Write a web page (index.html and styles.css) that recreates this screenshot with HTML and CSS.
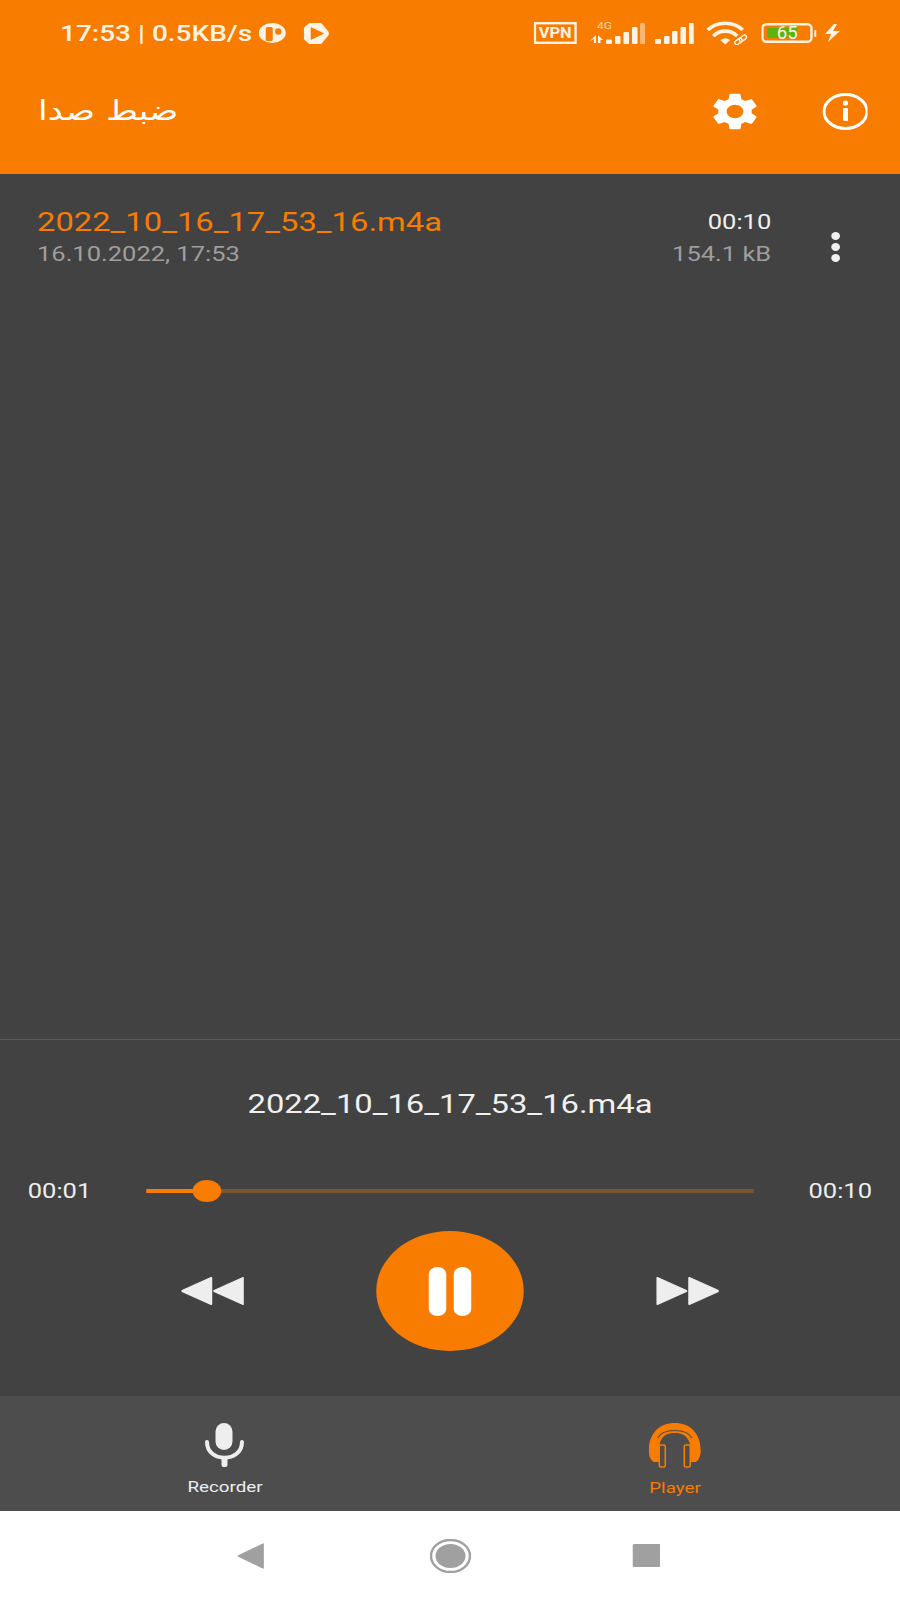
FILE: index.html
```html
<!DOCTYPE html>
<html lang="en">
<head>
<meta charset="utf-8">
<title>Recorder</title>
<link rel="stylesheet" href="styles.css">
</head>
<body>
<div class="screen">
  <header class="appbar">
    <div class="status">
      <div class="status-left">
        <span class="clock">17:53 | 0.5KB/s</span>
        <svg class="ic-a" width="21.6" height="20" viewBox="0 0 27 20" preserveAspectRatio="none"><ellipse cx="13.5" cy="10" rx="13.5" ry="10" fill="#fff3e6"/><rect x="7" y="4" width="7" height="14" rx="1.5" fill="#f77c00"/><circle cx="19.5" cy="8.5" r="3.2" fill="#f77c00"/></svg>
        <svg class="ic-b" width="20.8" height="21" viewBox="0 0 26 21" preserveAspectRatio="none"><path d="M6 1.2 H17 L24.8 10.5 L17 19.8 H6 L1.2 15.5 V5.5Z" fill="#fff3e6" stroke="#fff3e6" stroke-width="2.4" stroke-linejoin="round"/><path d="M7 4 L20.5 10.5 L7 17Z" fill="#f77c00"/></svg>
      </div>
      <div class="status-right">
        <svg class="ic-vpn" width="34.4" height="22" viewBox="0 0 43 22" preserveAspectRatio="none"><rect x="1.2" y="1.2" width="40.6" height="19.6" fill="none" stroke="#fff3e6" stroke-width="2.4"/><text x="21.5" y="16" text-anchor="middle" class="svg-vpn" textLength="33" lengthAdjust="spacingAndGlyphs">VPN</text></svg>
        <svg class="ic-sig1" width="44" height="22" viewBox="0 0 55 22" preserveAspectRatio="none"><text x="7" y="7" class="svg-4g" textLength="15" lengthAdjust="spacingAndGlyphs">4G</text><path d="M6 13 V21 H4 V17 L0 19Z M8 13 L13 18 H10.5 V21 H8Z" fill="#fff3e6"/><rect x="16" y="17.5" width="6" height="4.5" rx="1" fill="#fff3e6"/><rect x="25" y="14" width="5.5" height="8" rx="1" fill="#fff3e6"/><rect x="33.5" y="10" width="5.5" height="12" rx="1" fill="#fff3e6"/><rect x="42" y="5" width="5.5" height="17" rx="1" fill="#fff3e6"/><rect x="50" y="1" width="5" height="21" rx="1" fill="#fbb673"/></svg>
        <svg class="ic-sig2" width="31.2" height="22" viewBox="0 0 39 22" preserveAspectRatio="none"><rect x="0" y="17" width="6" height="5" rx="1" fill="#fff3e6"/><rect x="9" y="14" width="5.5" height="8" rx="1" fill="#fff3e6"/><rect x="17" y="9" width="5.5" height="13" rx="1" fill="#fff3e6"/><rect x="25.5" y="5" width="5.5" height="17" rx="1" fill="#fff3e6"/><rect x="34" y="1" width="5" height="21" rx="1" fill="#fff3e6"/></svg>
        <svg class="ic-wifi" width="32.8" height="24" viewBox="0 0 41 24" preserveAspectRatio="none"><g fill="none" stroke="#fff3e6" stroke-width="3.6"><path d="M1.5 9 C11 0 27 0 36.5 9"/><path d="M7 15 C14 8.5 24 8.5 31 15"/></g><path d="M14 19 C16.5 17 21.5 17 24 19 L19 23.5Z" fill="#fff3e6"/><g fill="none" stroke="#fff3e6" stroke-width="1.5"><rect x="28" y="18.5" width="8" height="4" rx="2" transform="rotate(-35 32 20)"/><rect x="32.5" y="15" width="8" height="4" rx="2" transform="rotate(-35 37 17)"/></g></svg>
        <svg class="ic-bat" width="44.8" height="20" viewBox="0 0 56 20" preserveAspectRatio="none"><rect x="1.2" y="1.2" width="49" height="17.6" rx="4" fill="none" stroke="#fff3e6" stroke-width="2.4"/><rect x="6" y="5" width="30" height="10" fill="#5db30c"/><text x="26" y="16" text-anchor="middle" class="svg-bat" textLength="21" lengthAdjust="spacingAndGlyphs">65</text><rect x="53" y="7" width="3" height="7" rx="1" fill="#fff3e6"/></svg>
        <svg class="ic-bolt" width="12" height="18" viewBox="0 0 15 18" preserveAspectRatio="none"><path d="M9 0 L0 10 H6 L3 18 L15 7 H8 L12 0Z" fill="#fff3e6"/></svg>
      </div>
    </div>
    <div class="toolbar">
      <span class="title" dir="rtl">ضبط صدا</span>
      <div class="actions">
        <svg class="gear" width="36" height="37" viewBox="2.3 2 19.4 20" preserveAspectRatio="none"><path fill="#fff" d="M19.14 12.94c.04-.3.06-.61.06-.94 0-.32-.02-.64-.07-.94l2.03-1.58c.18-.14.23-.41.12-.61l-1.92-3.32c-.12-.22-.37-.29-.59-.22l-2.39.96c-.5-.38-1.03-.7-1.62-.94l-.36-2.54c-.04-.24-.24-.41-.48-.41h-3.84c-.24 0-.43.17-.47.41l-.36 2.54c-.59.24-1.13.57-1.62.94l-2.39-.96c-.22-.08-.47 0-.59.22L2.74 8.87c-.12.21-.08.47.12.61l2.03 1.58c-.05.3-.09.63-.09.94s.02.64.07.94l-2.03 1.58c-.18.14-.23.41-.12.61l1.92 3.32c.12.22.37.29.59.22l2.39-.96c.5.38 1.03.7 1.62.94l.36 2.54c.05.24.24.41.48.41h3.84c.24 0 .44-.17.47-.41l.36-2.54c.59-.24 1.13-.56 1.62-.94l2.39.96c.22.08.47 0 .59-.22l1.92-3.32c.12-.22.07-.47-.12-.61l-2.01-1.58zM12 15.6c-1.98 0-3.6-1.62-3.6-3.6s1.62-3.6 3.6-3.6 3.6 1.62 3.6 3.6-1.62 3.6-3.6 3.6z"/></svg>
        <svg class="info" width="36.8" height="37" viewBox="0 0 46 37" preserveAspectRatio="none"><ellipse cx="23" cy="18.5" rx="21.5" ry="17" fill="none" stroke="#fff" stroke-width="3"/><rect x="20.5" y="15" width="5" height="13" rx="1" fill="#fff"/><circle cx="23" cy="10" r="2.6" fill="#fff"/></svg>
      </div>
    </div>
  </header>

  <main class="list">
    <div class="row">
      <div class="row-main">
        <div class="name">2022_10_16_17_53_16.m4a</div>
        <div class="sub">16.10.2022, 17:53</div>
      </div>
      <div class="row-meta">
        <div class="dur">00:10</div>
        <div class="sub">154.1 kB</div>
      </div>
      <div class="more"><i class="dot"></i><i class="dot"></i><i class="dot"></i></div>
    </div>
  </main>

  <section class="player">
    <div class="player-name">2022_10_16_17_53_16.m4a</div>
    <div class="seek">
      <span class="time">00:01</span>
      <div class="track"><div class="played"></div><div class="thumb"></div></div>
      <span class="time">00:10</span>
    </div>
    <div class="controls">
      <svg width="50.4" height="28" viewBox="0 0 63 28" preserveAspectRatio="none"><path fill="#eee" stroke="#eee" stroke-width="2" stroke-linejoin="round" d="M30 1 V27 L1 14Z M62 1 V27 L33 14Z"/></svg>
      <div class="play"><i class="bar"></i><i class="bar"></i></div>
      <svg width="50.4" height="28" viewBox="0 0 63 28" preserveAspectRatio="none"><path fill="#eee" stroke="#eee" stroke-width="2" stroke-linejoin="round" d="M1 1 V27 L30 14Z M33 1 V27 L62 14Z"/></svg>
    </div>
  </section>

  <nav class="tabs">
    <div class="tab">
      <svg width="31.2" height="44" viewBox="0 0 39 44" preserveAspectRatio="none"><rect x="10.5" y="0" width="17" height="27" rx="8.5" fill="#eee"/><path d="M2 19 C2 40 37 40 37 19" fill="none" stroke="#eee" stroke-width="4" stroke-linecap="round"/><rect x="16.5" y="33" width="6" height="11" rx="2" fill="#eee"/></svg>
      <span class="tab-label">Recorder</span>
    </div>
    <div class="tab tab-on">
      <svg width="41.6" height="45" viewBox="0 0 52 45" preserveAspectRatio="none"><path fill="#f77c00" d="M0 28 C0 10 11 0 26 0 C41 0 52 10 52 28 C52 33 50 37 47 39 L41 39 L41 20 C38 12 33 10 26 10 C19 10 14 12 11 20 L11 39 L5 39 C2 37 0 33 0 28Z"/><path d="M9 15 C14 5 38 5 43 15" fill="none" stroke="#4d4d4d" stroke-width="1.2"/><rect x="10.5" y="22" width="6" height="22" rx="1.5" fill="#4d4d4d" stroke="#f77c00" stroke-width="1.5"/><rect x="35.5" y="22" width="6" height="22" rx="1.5" fill="#4d4d4d" stroke="#f77c00" stroke-width="1.5"/></svg>
      <span class="tab-label">Player</span>
    </div>
  </nav>

  <footer class="sysnav">
    <svg width="21.6" height="26" viewBox="0 0 27 26" preserveAspectRatio="none"><path d="M26 1 V25 L1 13Z" fill="#a0a0a0" stroke="#a0a0a0" stroke-width="1.5" stroke-linejoin="round"/></svg>
    <svg class="sys-home" width="32.8" height="34" viewBox="0 0 41 34" preserveAspectRatio="none"><ellipse cx="20.5" cy="17" rx="19.5" ry="16" fill="none" stroke="#a0a0a0" stroke-width="2.4"/><ellipse cx="20.5" cy="17" rx="15" ry="12" fill="#a0a0a0"/></svg>
    <svg width="22.4" height="23" viewBox="0 0 28 23" preserveAspectRatio="none"><rect width="28" height="23" rx="1.5" fill="#a0a0a0"/></svg>
  </footer>
</div>
</body>
</html>
```
FILE: styles.css
```css
* { box-sizing: border-box; }
html, body { margin: 0; padding: 0; background: #fff; overflow: hidden; }
body { width: 900px; height: 1600px; font-family: Roboto, "Liberation Sans", sans-serif; }

/* The source capture is stretched 1.25x horizontally: lay out at 720 wide and stretch once. */
.screen { width: 720px; height: 1600px; display: flex; flex-direction: column; transform: scaleX(1.25); transform-origin: 0 0; background: #424242; }

.appbar { height: 174px; flex: none; background: #f77c00; color: #fff; }
.status { height: 66px; display: flex; align-items: center; justify-content: space-between; padding: 0 48px 0 48px; }
.status-left, .status-right { display: flex; align-items: center; }
.clock { font-size: 22.4px; font-weight: 500; color: #fff3e6; white-space: nowrap; }
.ic-a { margin-left: 5.6px; }
.ic-b { margin-left: 13.6px; }
.status-right svg { display: block; }
.ic-sig1 { margin-left: 10px; }
.ic-sig2 { margin-left: 8px; }
.ic-wifi { margin-left: 10.4px; }
.ic-bat { margin-left: 10.4px; }
.ic-bolt { margin-left: 6.7px; }
.svg-vpn { font: 700 15px Roboto, sans-serif; fill: #fff3e6; }
.svg-4g { font: 400 9px Roboto, sans-serif; fill: #fdd9b5; }
.svg-bat { font: 400 18px Roboto, sans-serif; fill: #fff3e6; }

.toolbar { height: 94px; display: flex; align-items: center; justify-content: space-between; padding: 0 25.6px 0 30.4px; margin-top: -2px; }
.title { font-family: "DejaVu Sans", sans-serif; font-size: 27.6px; line-height: 40px; }
.actions { display: flex; align-items: center; gap: 52px; }

.list { flex: 1; min-height: 0; }
.row { display: flex; align-items: flex-start; padding: 31px 0 0 29.6px; }
.row-main { flex: 1; }
.row-meta { text-align: right; }
.name { font-size: 26.2px; line-height: 34px; color: #f77c00; white-space: nowrap; }
.sub { font-size: 20.4px; line-height: 30px; color: #9e9e9e; white-space: nowrap; }
.dur { font-size: 20.4px; line-height: 34px; color: #f0f0f0; }
.more { width: 100px; display: flex; flex-direction: column; align-items: center; gap: 3px; padding: 27px 0 0 3px; margin-right: 3px; }
.dot { width: 7px; height: 8px; border-radius: 50%; background: #f0f0f0; display: block; }

.player { flex: none; height: 357px; border-top: 1px solid #5a5a5a; display: flex; flex-direction: column; }
.player-name { margin-top: 44px; height: 40px; line-height: 40px; font-size: 26.2px; text-align: center; color: #f0f0f0; }
.seek { margin-top: 47px; height: 40px; display: flex; align-items: center; padding: 0 22.4px 0 22.2px; }
.time { font-size: 20.4px; color: #eee; flex: none; }
.time:first-child { width: 94.6px; }
.time:last-child { margin-left: 44px; }
.track { flex: 1; height: 4px; position: relative; background: #7a5530; }
.played { width: 9%; height: 100%; background: #f77c00; }
.thumb { position: absolute; left: 37px; top: -9px; width: 23px; height: 22px; border-radius: 50%; background: #f77c00; }
.controls { margin-top: 20px; display: flex; align-items: center; justify-content: center; gap: 106px; }
.play { width: 117.6px; height: 120px; border-radius: 50%; background: #f77c00; display: flex; align-items: center; justify-content: center; gap: 5.6px; }
.bar { width: 14.4px; height: 49px; border-radius: 8px; background: #fff; display: block; }

.tabs { flex: none; height: 115px; background: #4d4d4d; display: flex; }
.tab { flex: 1; display: flex; flex-direction: column; align-items: center; padding-top: 27px; color: #eee; }
.tab-on { color: #f77c00; }
.tab-label { font-size: 15px; line-height: 20px; margin-top: 10px; }

.sysnav { flex: none; height: 89px; background: #fff; display: flex; align-items: center; justify-content: center; padding-right: 2px; }
.sys-home { margin: 0 129px 0 133px; }
```
